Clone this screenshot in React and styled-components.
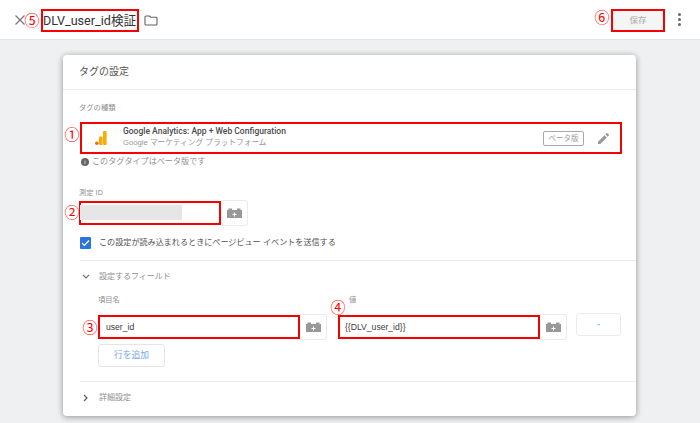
import React from "react";
import styled, { createGlobalStyle } from "styled-components";

const GlobalStyle = createGlobalStyle`
  html, body {
    margin: 0;
    padding: 0;
    background: #eff0f2;
    font-family: "Liberation Sans", "Noto Sans CJK JP", sans-serif;
    color: #444;
  }
`;

const Lego = () => (
  <svg width="15" height="10" viewBox="0 0 15 10">
    <path fill="#989898" d="M0 2h1.5V.5h3.5V2h5V.5h3.5V2H15v8H0z" />
    <path fill="#fff" d="M7 4.5h1V6h1.5v1H8v1.5H7V7H5.5V6H7z" />
  </svg>
);

const Field = ({ mark, width, children, badgeLeft, badgeTop }) => (
  <FieldRow>
    <FieldInput $width={width}>
      {children}
      <Badge $left={badgeLeft} $top={badgeTop}>{mark}</Badge>
    </FieldInput>
    <LegoButton>
      <Lego />
    </LegoButton>
  </FieldRow>
);

const App = () => {
  return (
    <Page>
      <GlobalStyle />
      <Header>
        <CloseIcon width="12" height="12" viewBox="0 0 12 12">
          <path d="M1.5 1.5l9 9M10.5 1.5l-9 9" stroke="#757575" strokeWidth="1.2" fill="none" />
        </CloseIcon>
        <TitleBox>
          DLV_user_id検証
          <Badge $left={-19} $top={0}>⑤</Badge>
        </TitleBox>
        <FolderIcon width="14" height="12" viewBox="0 0 14 12">
          <path d="M1 3.2c0-.6.4-1.2 1-1.2h3.4l1.3 1.2H12c.6 0 1 .5 1 1V10c0 .6-.4 1-1 1H2c-.6 0-1-.4-1-1z" stroke="#616161" strokeWidth="1.1" fill="none" />
        </FolderIcon>
        <Spacer />
        <SaveButton>
          保存
          <Badge $left={-19} $top={-3}>⑥</Badge>
        </SaveButton>
        <Kebab>
          <i />
          <i />
          <i />
        </Kebab>
      </Header>

      <Card>
        <CardTitle>タグの設定</CardTitle>
        <Section>
          <SmallLabel>タグの種類</SmallLabel>
          <TagRow>
            <Badge $left={-18} $top={1}>①</Badge>
            <svg width="12" height="14" viewBox="0 0 12 14">
              <rect x="8" y="0" width="3.6" height="14" rx="1" fill="#f9ab00" />
              <rect x="4" y="5.5" width="3.6" height="8.5" rx="1" fill="#f9ab00" />
              <circle cx="1.8" cy="12.2" r="1.8" fill="#e37400" />
            </svg>
            <TagText>
              <TagName>Google Analytics: App + Web Configuration</TagName>
              <TagVendor>Google マーケティング プラットフォーム</TagVendor>
            </TagText>
            <BetaChip>ベータ版</BetaChip>
            <svg width="11" height="11" viewBox="0 0 13 13">
              <path fill="#999" d="M0 10.3V13h2.7l7.7-7.7-2.7-2.7zM12.8 2.9c.3-.3.3-.7 0-1L11.1.2c-.3-.3-.7-.3-1 0L8.7 1.6l2.7 2.7z" />
            </svg>
          </TagRow>
          <Note>
            <InfoDot>i</InfoDot>
            このタグタイプはベータ版です
          </Note>

          <IdLabel>測定 ID</IdLabel>
          <Field mark="②" width={142} badgeLeft={-17} badgeTop={0}>
            <Masked />
          </Field>

          <CheckRow>
            <CheckBox>
              <svg width="9" height="8" viewBox="0 0 9 8">
                <path d="M1 4l2.4 2.4L8 1.5" stroke="#fff" strokeWidth="1.3" fill="none" />
              </svg>
            </CheckBox>
            この設定が読み込まれるときにページビュー イベントを送信する
          </CheckRow>
        </Section>

        <FoldSection $open>
          <FoldHead>
            <svg width="8" height="6" viewBox="0 0 8 6">
              <path d="M1 1l3 3 3-3" stroke="#757575" strokeWidth="1.2" fill="none" />
            </svg>
            設定するフィールド
          </FoldHead>
          <Columns>
            <FieldColumn>
              <SmallLabel>項目名</SmallLabel>
              <Field mark="③" width={202} badgeLeft={-18} badgeTop={1}>
                <InputText>user_id</InputText>
              </Field>
            </FieldColumn>
            <FieldColumn>
              <ValueLabel>値</ValueLabel>
              <Field mark="④" width={202} badgeLeft={-10} badgeTop={-19}>
                <InputText $tight>{"{{DLV_user_id}}"}</InputText>
              </Field>
            </FieldColumn>
            <RemoveButton>-</RemoveButton>
          </Columns>
          <AddButton>行を追加</AddButton>
        </FoldSection>

        <FoldSection>
          <FoldHead>
            <svg width="6" height="8" viewBox="0 0 6 8">
              <path d="M1 1l3 3-3 3" stroke="#616161" strokeWidth="1.2" fill="none" />
            </svg>
            詳細設定
          </FoldHead>
        </FoldSection>
      </Card>
    </Page>
  );
};

export default App;

const Page = styled.div`
  width: 700px;
  height: 423px;
  overflow: hidden;
  background: #eff0f2;
`;

const Header = styled.header`
  display: flex;
  align-items: center;
  box-sizing: border-box;
  height: 40px;
  padding-left: 14px;
  background: #fff;
  border-bottom: 1px solid #e3e4e6;
`;

const CloseIcon = styled.svg`
  flex: none;
`;

const Spacer = styled.div`
  flex: 1;
`;

const Badge = styled.span`
  position: absolute;
  left: ${(p) => p.$left}px;
  top: ${(p) => p.$top}px;
  width: 16px;
  font-size: 15px;
  line-height: 18px;
  font-weight: 400;
  text-align: center;
  color: #ff0000;
  font-family: "Noto Sans CJK JP", sans-serif;
`;

const RedBox = styled.div`
  position: relative;
  box-sizing: border-box;
  border: 2px solid #f60000;
`;

const TitleBox = styled(RedBox)`
  width: 98px;
  height: 23px;
  margin: 2px 0 0 15px;
  font-family: Roboto, "Noto Sans CJK JP", sans-serif;
  font-size: 12.6px;
  line-height: 19px;
  white-space: nowrap;
  color: #333;
`;

const FolderIcon = styled.svg`
  margin-left: 5px;
`;

const SaveButton = styled(RedBox)`
  width: 54px;
  height: 23px;
  margin-top: 2px;
  background: #f5f5f5;
  color: #a8a8a8;
  font-size: 8.5px;
  line-height: 19px;
  text-align: center;
`;

const Kebab = styled.div`
  display: flex;
  flex-direction: column;
  gap: 2px;
  margin: 0 19px 0 13px;
  i {
    display: block;
    width: 3px;
    height: 3px;
    border-radius: 50%;
    background: #666;
  }
`;

const Card = styled.main`
  box-sizing: border-box;
  width: 573px;
  height: 361px;
  margin: 15px 0 0 63px;
  background: #fff;
  border-radius: 4px;
  box-shadow: 0 1px 6px rgba(0, 0, 0, 0.4);
`;

const CardTitle = styled.h2`
  box-sizing: border-box;
  height: 35px;
  margin: 0;
  padding: 10px 0 0 16px;
  font-size: 10px;
  line-height: 14px;
  font-weight: 400;
  color: #555;
  border-bottom: 1px solid #ebebeb;
`;

const Section = styled.section`
  box-sizing: border-box;
  height: 170px;
  margin: 0 14px 0 16px;
  padding-top: 12px;
`;

const SmallLabel = styled.div`
  height: 12px;
  font-size: 7.3px;
  line-height: 12px;
  color: #8f8f8f;
`;

const TagRow = styled(RedBox)`
  display: flex;
  align-items: center;
  width: 542px;
  height: 32px;
  margin: 8px 0 0 1px;
  padding: 0 11px 0 13px;
`;

const TagText = styled.div`
  flex: 1;
  margin-left: 16px;
  padding-bottom: 2px;
`;

const TagName = styled.div`
  font-family: Roboto, sans-serif;
  font-size: 8.5px;
  line-height: 11px;
  font-weight: 500;
  color: #4a4a4a;
`;

const TagVendor = styled.div`
  font-size: 7.7px;
  line-height: 11px;
  color: #999;
`;

const BetaChip = styled.span`
  box-sizing: border-box;
  width: 41px;
  height: 15px;
  margin-right: 14px;
  border: 1px solid #a8a8a8;
  border-radius: 2px;
  font-size: 7.5px;
  line-height: 13px;
  text-align: center;
  color: #999;
`;

const Note = styled.div`
  display: flex;
  align-items: center;
  gap: 3px;
  height: 12px;
  margin-top: 2px;
  padding-left: 2px;
  font-size: 8.1px;
  line-height: 12px;
  color: #8f8f8f;
`;

const InfoDot = styled.span`
  width: 8px;
  height: 8px;
  border-radius: 50%;
  background: #666;
  color: #fff;
  font-size: 6px;
  line-height: 8px;
  text-align: center;
`;

const IdLabel = styled(SmallLabel)`
  margin-top: 19px;
`;

const FieldRow = styled.div`
  display: flex;
  height: 24px;
  margin-top: 2px;
`;

const FieldInput = styled(RedBox)`
  flex: none;
  width: ${(p) => p.$width}px;
  height: 24px;
`;

const Masked = styled.div`
  width: 102px;
  height: 15px;
  margin: 2px 0 0 -1px;
  background: #e6e6e6;
`;

const InputText = styled.div`
  padding-left: ${(p) => (p.$tight ? 5 : 6)}px;
  font-size: 8.6px;
  line-height: 20px;
  color: #3c3c3c;
`;

const LegoButton = styled.div`
  display: flex;
  flex: none;
  align-items: center;
  justify-content: center;
  box-sizing: border-box;
  width: 27px;
  height: 26px;
  margin-top: -1px;
  border: 1px solid #ebebeb;
  border-left: none;
  border-radius: 0 3px 3px 0;
`;

const CheckRow = styled.div`
  display: flex;
  align-items: center;
  gap: 8px;
  height: 12px;
  margin: 12px 0 0 1px;
  font-size: 8.1px;
  line-height: 12px;
  color: #4f4f4f;
`;

const CheckBox = styled.span`
  display: flex;
  align-items: center;
  justify-content: center;
  width: 11px;
  height: 12px;
  border-radius: 1px;
  background: #2a74e0;
`;

const FoldSection = styled.section`
  box-sizing: border-box;
  height: ${(p) => (p.$open ? "121px" : "35px")};
  margin: 0 0 0 17px;
  padding: 10px 15px 0 0;
  border-top: 1px solid #ebebeb;
`;

const FoldHead = styled.div`
  display: flex;
  align-items: center;
  height: 12px;
  padding-left: 2px;
  font-size: 8px;
  line-height: 12px;
  color: #8f8f8f;
  svg {
    width: 8px;
    margin-right: 9px;
  }
`;

const Columns = styled.div`
  display: flex;
  margin: 11px 0 0 18px;
`;

const FieldColumn = styled.div`
  flex: none;
  width: 229px;
  margin-right: 11px;
  ${FieldRow} {
    margin-top: 9px;
  }
`;

const ValueLabel = styled(SmallLabel)`
  padding-left: 11px;
`;

const RemoveButton = styled.div`
  box-sizing: border-box;
  width: 45px;
  height: 23px;
  margin: 19px 0 0 -2px;
  border: 1px solid #ebebeb;
  border-radius: 3px;
  text-align: center;
  font-size: 9px;
  line-height: 21px;
  font-weight: 700;
  color: #8ab4f0;
`;

const AddButton = styled.div`
  box-sizing: border-box;
  width: 67px;
  height: 23px;
  margin: 5px 0 0 18px;
  border: 1px solid #e6e6e6;
  border-radius: 3px;
  text-align: center;
  font-size: 8.8px;
  line-height: 21px;
  color: #7aa7ea;
`;
